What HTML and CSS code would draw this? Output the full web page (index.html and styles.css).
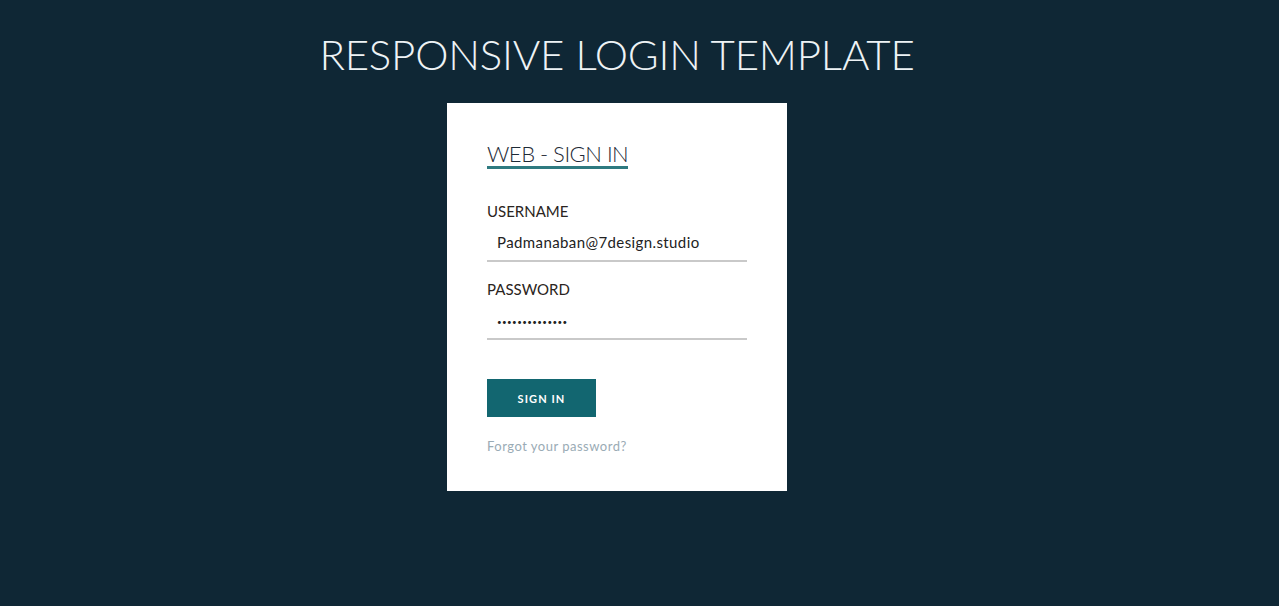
FILE: index.html
```html
<!DOCTYPE html>
<html>
<head>
<meta charset="utf-8">
<link rel="stylesheet" href="styles.css">
</head>
<body>
<div class="page">
  <h1 class="title">RESPONSIVE LOGIN TEMPLATE</h1>
  <div class="card">
    <h2 class="card-title">WEB - SIGN IN</h2>
    <div class="field">
      <label class="label">USERNAME</label>
      <div class="input">Padmanaban@7design.studio</div>
    </div>
    <div class="field">
      <label class="label">PASSWORD</label>
      <div class="input dots">••••••••••••••</div>
    </div>
    <button class="btn">SIGN IN</button>
    <a class="forgot">Forgot your password?</a>
  </div>
</div>
</body>
</html>
```

FILE: styles.css
```css
html, body {
  margin: 0;
  height: 100%;
  background: #0f2735;
  font-family: Lato, "Open Sans", sans-serif;
}
.page {
  display: flex;
  flex-direction: column;
  align-items: center;
  padding-right: 45px;
}
.title {
  margin: 28px 0 0;
  height: 75px;
  font-size: 42px;
  line-height: 52px;
  font-weight: 300;
  color: #eef3f5;
  letter-spacing: -0.2px;
}
.card {
  width: 260px;
  background: #fff;
  padding: 39px 40px 37px;
  display: flex;
  flex-direction: column;
  align-items: flex-start;
}
.card-title {
  margin: 0 0 33px;
  font-size: 22px;
  line-height: 24px;
  font-weight: 300;
  letter-spacing: -0.5px;
  color: #1e2a36;
  border-bottom: 3px solid #2e7a80;
}
.field {
  width: 100%;
  margin-bottom: 18px;
}
.label {
  display: block;
  font-size: 15px;
  line-height: 18px;
  color: #2a2420;
}
.input {
  box-sizing: border-box;
  width: 100%;
  height: 42px;
  padding: 13px 10px 0;
  font-size: 15px;
  line-height: 18px;
  letter-spacing: 0.4px;
  color: #222;
  border-bottom: 2px solid #c9c9c9;
}
.dots {
  font-size: 8px;
  letter-spacing: 0.4px;
  padding-top: 15px;
}
.btn {
  margin-top: 21px;
  width: 109px;
  height: 38px;
  border: 0;
  background: #126670;
  color: #fff;
  font-family: Lato, sans-serif;
  font-size: 11px;
  font-weight: 700;
  letter-spacing: 1.1px;
  padding: 0;
}
.forgot {
  margin-top: 21px;
  font-size: 13px;
  line-height: 16px;
  letter-spacing: 0.5px;
  color: #9aabb5;
}
```
